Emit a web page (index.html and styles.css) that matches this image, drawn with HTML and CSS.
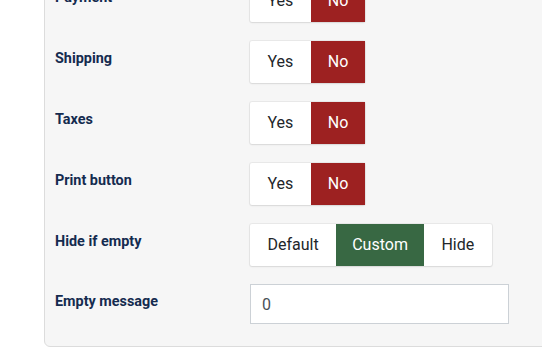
FILE: index.html
```html
<!DOCTYPE html>
<html lang="en">
<head>
  <meta charset="UTF-8">
  <meta name="viewport" content="width=device-width, initial-scale=1.0">
  <title>Display options</title>
  <link rel="stylesheet" href="styles.css">
</head>
<body>
<div class="card">
  <div class="row">
    <label class="row-label">Payment</label>
    <div class="switcher">
      <span class="opt">Yes</span>
      <span class="opt opt-no">No</span>
    </div>
  </div>
  <div class="row">
    <label class="row-label">Shipping</label>
    <div class="switcher">
      <span class="opt">Yes</span>
      <span class="opt opt-no">No</span>
    </div>
  </div>
  <div class="row">
    <label class="row-label">Taxes</label>
    <div class="switcher">
      <span class="opt">Yes</span>
      <span class="opt opt-no">No</span>
    </div>
  </div>
  <div class="row">
    <label class="row-label">Print button</label>
    <div class="switcher">
      <span class="opt">Yes</span>
      <span class="opt opt-no">No</span>
    </div>
  </div>
  <div class="row row-tight">
    <label class="row-label">Hide if empty</label>
    <div class="switcher">
      <span class="opt">Default</span>
      <span class="opt opt-custom">Custom</span>
      <span class="opt">Hide</span>
    </div>
  </div>
  <div class="row row-last">
    <label class="row-label" for="empty-msg">Empty message</label>
    <input type="text" id="empty-msg" class="field" value="0">
  </div>
</div>
</body>
</html>
```

FILE: styles.css
```css
body {
  font-family: Roboto, "Liberation Sans", Arial, sans-serif;
  margin: 0;
  padding: 0;
  background-color: #fff;
  overflow: hidden;
}

.card {
  margin: -40px 0 0 44px;
  width: 560px;
  background: #f6f6f6;
  border: 1px solid #dcdcdc;
  border-radius: 6px;
  padding: 19px 0 22px 10px;
}

.row {
  display: flex;
  align-items: flex-start;
  margin-bottom: 19px;
}

.row-tight {
  margin-bottom: 18px;
}

.row-last {
  margin-bottom: 0;
}

.row-label {
  width: 195px;
  flex: none;
  padding-top: 8px;
  font-size: 14.4px;
  line-height: 20px;
  font-weight: 700;
  color: #142b4f;
}

.switcher {
  display: flex;
  background: #fff;
  box-shadow: 0 0 0 1px rgba(0, 0, 0, 0.05), 0 1px 2px rgba(0, 0, 0, 0.08);
  border-radius: 2px;
}

.opt {
  height: 42px;
  line-height: 42px;
  padding: 0 17.5px;
  font-size: 16px;
  color: #22262a;
}

.opt-no {
  background: #9d2121;
  color: #fff;
  padding: 0 17px;
}

.opt-custom {
  background: #386843;
  color: #fff;
  padding: 0 16px;
}

.field {
  box-sizing: border-box;
  width: 259px;
  height: 40px;
  padding: 0 11px;
  border: 1px solid #ccd1d6;
  border-radius: 0;
  background: #fff;
  font-family: inherit;
  font-size: 16px;
  color: #495057;
}
```
